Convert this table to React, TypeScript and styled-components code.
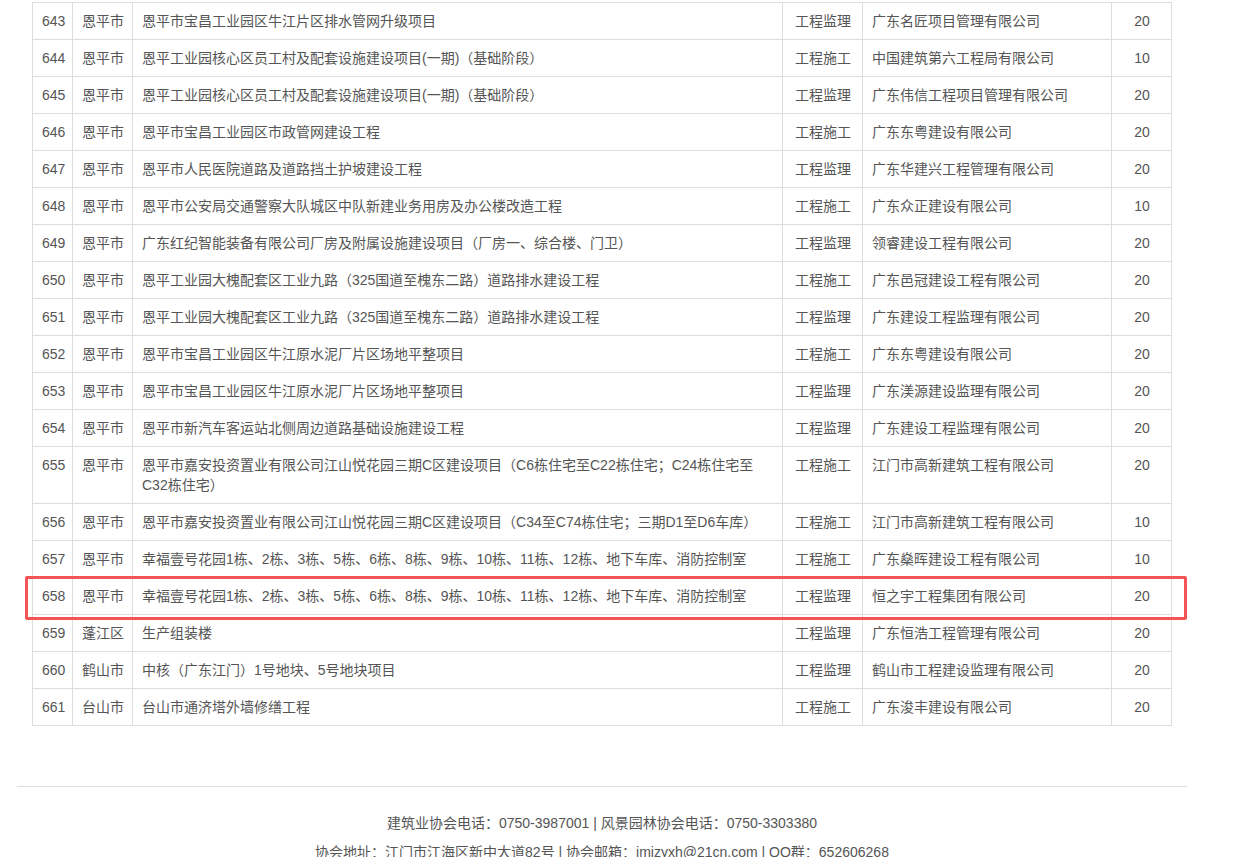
import React from "react";
import styled, { createGlobalStyle } from "styled-components";

const GlobalStyle = createGlobalStyle`
  html, body { margin: 0; padding: 0; background: #fff; }
  body {
    font-family: "Liberation Sans", Arial, "Noto Sans CJK SC", sans-serif;
    font-size: 14px;
    line-height: 20px;
    color: #555;
  }
`;

const Page = styled.div`
  width: 1170px;
  margin-left: 17px;
  padding-top: 2px;
`;

const TableWrap = styled.div`
  padding: 0 15px;
`;

const Table = styled.table`
  width: 1139px;
  table-layout: fixed;
  border-collapse: collapse;
  border-spacing: 0;
`;

const Col = styled.col<{ $w: number }>`
  width: ${(p) => p.$w}px;
`;

const Cell = styled.td<{ $align?: "left" | "center" }>`
  border: 1px solid #ddd;
  padding: 8px 8px 8px 9px;
  line-height: 20px;
  vertical-align: top;
  text-align: ${(p) => p.$align ?? "left"};
  color: #555;
  position: relative;
`;

const Highlight = styled.div`
  position: absolute;
  left: -8px;
  top: -2px;
  width: 1156px;
  height: 38px;
  border: 3px solid #f45454;
  border-radius: 2px;
  pointer-events: none;
`;

const Footer = styled.footer`
  margin-top: 60px;
  border-top: 1px solid #ddd;
  padding-top: 26px;
  text-align: center;
  color: #555;
`;

const FooterLine = styled.p`
  margin: 0 0 9px;
  line-height: 20px;
`;

type Row = {
  no: number;
  city: string;
  name: string;
  type: string;
  company: string;
  score: number;
  mark?: boolean;
};

const rows: Row[] = [
  { no: 643, city: "恩平市", name: "恩平市宝昌工业园区牛江片区排水管网升级项目", type: "工程监理", company: "广东名匠项目管理有限公司", score: 20 },
  { no: 644, city: "恩平市", name: "恩平工业园核心区员工村及配套设施建设项目(一期)（基础阶段）", type: "工程施工", company: "中国建筑第六工程局有限公司", score: 10 },
  { no: 645, city: "恩平市", name: "恩平工业园核心区员工村及配套设施建设项目(一期)（基础阶段）", type: "工程监理", company: "广东伟信工程项目管理有限公司", score: 20 },
  { no: 646, city: "恩平市", name: "恩平市宝昌工业园区市政管网建设工程", type: "工程施工", company: "广东东粤建设有限公司", score: 20 },
  { no: 647, city: "恩平市", name: "恩平市人民医院道路及道路挡土护坡建设工程", type: "工程监理", company: "广东华建兴工程管理有限公司", score: 20 },
  { no: 648, city: "恩平市", name: "恩平市公安局交通警察大队城区中队新建业务用房及办公楼改造工程", type: "工程施工", company: "广东众正建设有限公司", score: 10 },
  { no: 649, city: "恩平市", name: "广东红纪智能装备有限公司厂房及附属设施建设项目（厂房一、综合楼、门卫）", type: "工程监理", company: "领睿建设工程有限公司", score: 20 },
  { no: 650, city: "恩平市", name: "恩平工业园大槐配套区工业九路（325国道至槐东二路）道路排水建设工程", type: "工程施工", company: "广东邑冠建设工程有限公司", score: 20 },
  { no: 651, city: "恩平市", name: "恩平工业园大槐配套区工业九路（325国道至槐东二路）道路排水建设工程", type: "工程监理", company: "广东建设工程监理有限公司", score: 20 },
  { no: 652, city: "恩平市", name: "恩平市宝昌工业园区牛江原水泥厂片区场地平整项目", type: "工程施工", company: "广东东粤建设有限公司", score: 20 },
  { no: 653, city: "恩平市", name: "恩平市宝昌工业园区牛江原水泥厂片区场地平整项目", type: "工程监理", company: "广东渼源建设监理有限公司", score: 20 },
  { no: 654, city: "恩平市", name: "恩平市新汽车客运站北侧周边道路基础设施建设工程", type: "工程监理", company: "广东建设工程监理有限公司", score: 20 },
  { no: 655, city: "恩平市", name: "恩平市嘉安投资置业有限公司江山悦花园三期C区建设项目（C6栋住宅至C22栋住宅；C24栋住宅至C32栋住宅）", type: "工程施工", company: "江门市高新建筑工程有限公司", score: 20 },
  { no: 656, city: "恩平市", name: "恩平市嘉安投资置业有限公司江山悦花园三期C区建设项目（C34至C74栋住宅；三期D1至D6车库）", type: "工程施工", company: "江门市高新建筑工程有限公司", score: 10 },
  { no: 657, city: "恩平市", name: "幸福壹号花园1栋、2栋、3栋、5栋、6栋、8栋、9栋、10栋、11栋、12栋、地下车库、消防控制室", type: "工程施工", company: "广东燊晖建设工程有限公司", score: 10 },
  { no: 658, city: "恩平市", name: "幸福壹号花园1栋、2栋、3栋、5栋、6栋、8栋、9栋、10栋、11栋、12栋、地下车库、消防控制室", type: "工程监理", company: "恒之宇工程集团有限公司", score: 20, mark: true },
  { no: 659, city: "蓬江区", name: "生产组装楼", type: "工程监理", company: "广东恒浩工程管理有限公司", score: 20 },
  { no: 660, city: "鹤山市", name: "中核（广东江门）1号地块、5号地块项目", type: "工程监理", company: "鹤山市工程建设监理有限公司", score: 20 },
  { no: 661, city: "台山市", name: "台山市通济塔外墙修缮工程", type: "工程施工", company: "广东浚丰建设有限公司", score: 20 },
];

export default function App() {
  return (
    <>
      <GlobalStyle />
      <Page>
        <TableWrap>
          <Table>
            <colgroup>
              <Col $w={40} />
              <Col $w={60} />
              <Col $w={650} />
              <Col $w={80} />
              <Col $w={249} />
              <Col $w={60} />
            </colgroup>
            <tbody>
              {rows.map((r) => (
                <tr key={r.no}>
                  <Cell $align="center">
                    {r.mark && <Highlight />}
                    {r.no}
                  </Cell>
                  <Cell $align="center">{r.city}</Cell>
                  <Cell>{r.name}</Cell>
                  <Cell $align="center">{r.type}</Cell>
                  <Cell>{r.company}</Cell>
                  <Cell $align="center">{r.score}</Cell>
                </tr>
              ))}
            </tbody>
          </Table>
        </TableWrap>
        <Footer>
          <FooterLine>建筑业协会电话：0750-3987001 | 风景园林协会电话：0750-3303380</FooterLine>
          <FooterLine>协会地址：江门市江海区新中大道82号 | 协会邮箱：jmjzyxh@21cn.com | QQ群：652606268</FooterLine>
        </Footer>
      </Page>
    </>
  );
}
